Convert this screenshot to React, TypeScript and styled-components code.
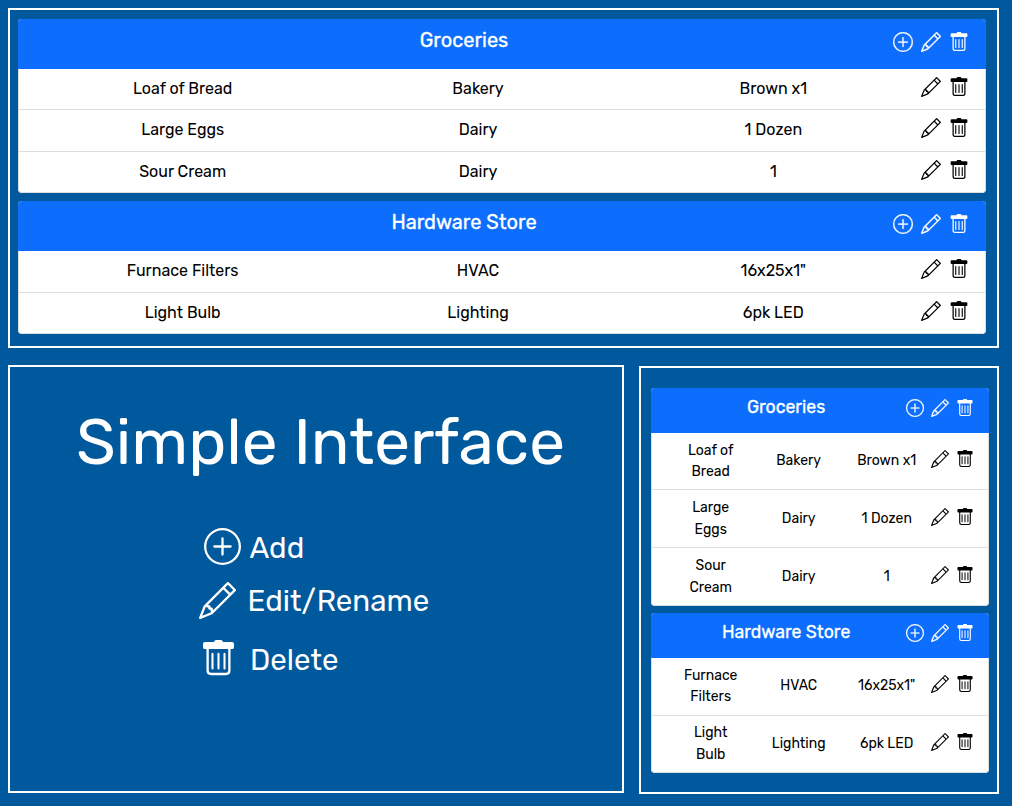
import React from "react";
import styled, { createGlobalStyle } from "styled-components";
import { BsPencil, BsPlusCircle } from "react-icons/bs";

const GlobalStyle = createGlobalStyle`
  *, *::before, *::after { box-sizing: border-box; }
  body {
    margin: 0;
    background: #00589d;
    color: #000;
    font-family: Rubik, Roboto, "Liberation Sans", sans-serif;
  }
`;

const Page = styled.main`
  width: 1012px;
  height: 806px;
  padding: 8px 13px 0 8px;
  overflow: hidden;
`;

const Panel = styled.section`
  border: 2px solid #fff;
`;

const WidePanel = styled(Panel)`
  height: 340px;
  padding: 9px 11px 0 8px;
`;

const Columns = styled.div`
  display: grid;
  grid-template-columns: 616px 360px;
  column-gap: 15px;
  margin-top: 17px;
`;

const IntroPanel = styled(Panel)`
  height: 428px;
  color: #fff;
`;

const NarrowPanel = styled(Panel)`
  height: 428px;
  margin-top: 1px;
  padding: 20px 8.5px 0 10px;
`;

const CardStack = styled.div<{ $compact: boolean }>`
  display: flex;
  flex-direction: column;
  gap: ${(p) => (p.$compact ? 7 : 8)}px;
`;

const Card = styled.article`
  border-radius: 4px;
  overflow: hidden;
  background: #fff;
`;

const CardHeader = styled.header<{ $compact: boolean; $h: number }>`
  display: flex;
  align-items: flex-start;
  height: ${(p) => p.$h}px;
  padding: ${(p) => (p.$compact ? "9px 14.8px 0 15.5px" : "9px 17px 0 17px")};
  background: #0d6efd;
  color: #fff;
  svg[fill="currentColor"] {
    stroke-width: 0.2;
  }
`;

const Title = styled.h5<{ $compact: boolean }>`
  flex: 1;
  margin: 0;
  text-align: center;
  font-size: ${(p) => (p.$compact ? 17.7 : 20)}px;
  line-height: ${(p) => (p.$compact ? 20 : 24)}px;
  font-weight: 400;
  -webkit-text-stroke: 0.3px #fff;
`;

const Row = styled.div<{ $compact: boolean; $h: number }>`
  display: flex;
  align-items: ${(p) => (p.$compact ? "center" : "flex-start")};
  height: ${(p) => p.$h}px;
  padding: ${(p) => (p.$compact ? "0 13.8px 0 14.7px" : "8px 16px 0 16px")};
  border: 1px solid #dcdfe2;
  border-top: 0;
  &:last-child {
    border-radius: 0 0 4px 4px;
  }
`;

const Cell = styled.span<{ $compact: boolean }>`
  flex: 1 1 0;
  text-align: center;
  font-size: ${(p) => (p.$compact ? 14 : 16)}px;
  line-height: ${(p) => (p.$compact ? 21.4 : 24)}px;
  white-space: pre-line;
`;

const Actions = styled.div<{ $compact: boolean; $top: number }>`
  display: flex;
  gap: ${(p) => (p.$compact ? 7 : 8)}px;
  align-self: flex-start;
  padding-top: ${(p) => p.$top}px;
  svg {
    display: block;
    width: ${(p) => (p.$compact ? 18 : 20)}px;
    height: ${(p) => (p.$compact ? 18 : 20)}px;
  }
`;

const Heading = styled.h1`
  margin: 37px 0 0 9px;
  text-align: center;
  font-size: 64px;
  line-height: 76px;
  font-weight: 400;
`;

const Legend = styled.ul`
  display: flex;
  flex-direction: column;
  margin: 48px 0 0 189px;
  padding: 0;
  list-style: none;
`;

const LegendItem = styled.li<{ $h: number; $x: number; $gap: number; $line?: number }>`
  display: flex;
  align-items: flex-start;
  height: ${(p) => p.$h}px;
  padding-left: ${(p) => p.$x}px;
  gap: ${(p) => p.$gap}px;
  font-size: 29.5px;
  line-height: ${(p) => p.$line ?? 37}px;
  svg {
    width: 37px;
    height: 37px;
  }
`;

const TrashIcon = () => (
  <svg viewBox="0 0 16 16" fill="none" stroke="currentColor">
    <path
      d="M6.1.9Q6.1 0 7 0h2q.9 0 .9.9h4q.8 0 .8.8v1.4q0 .8-.8.8H2.1q-.8 0-.8-.8V1.7q0-.8.8-.8z"
      fill="currentColor"
      stroke="none"
    />
    <path d="M3.3 3.5v9.7q0 1.5 1.5 1.5h6.4q1.5 0 1.5-1.5V3.5" />
    <path d="M5.4 6v6.3M8 6v6.3M10.6 6v6.3" strokeWidth=".9" strokeLinecap="round" />
  </svg>
);

type Item = {
  cells: [string, string, string];
  compactName: string;
  h: number;
  compactH: number;
  compactTop: number;
};
type List = { name: string; compactHeader: number; items: Item[] };

const lists: List[] = [
  {
    name: "Groceries",
    compactHeader: 45,
    items: [
      { cells: ["Loaf of Bread", "Bakery", "Brown x1"], compactName: "Loaf of\nBread", h: 41, compactH: 57, compactTop: 17 },
      { cells: ["Large Eggs", "Dairy", "1 Dozen"], compactName: "Large\nEggs", h: 42, compactH: 58, compactTop: 18 },
      { cells: ["Sour Cream", "Dairy", "1"], compactName: "Sour\nCream", h: 41, compactH: 58, compactTop: 18 },
    ],
  },
  {
    name: "Hardware Store",
    compactHeader: 44.5,
    items: [
      { cells: ["Furnace Filters", "HVAC", "16x25x1\""], compactName: "Furnace\nFilters", h: 42, compactH: 58, compactTop: 17.5 },
      { cells: ["Light Bulb", "Lighting", "6pk LED"], compactName: "Light\nBulb", h: 41, compactH: 57.5, compactTop: 17.5 },
    ],
  },
];

const Lists = ({ compact = false }: { compact?: boolean }) => (
  <CardStack $compact={compact}>
    {lists.map((list) => (
      <Card key={list.name}>
        <CardHeader $compact={compact} $h={compact ? list.compactHeader : 50}>
          <Title $compact={compact}>{list.name}</Title>
          <Actions $compact={compact} $top={compact ? 2 : 4}>
            <BsPlusCircle />
            <BsPencil />
            <TrashIcon />
          </Actions>
        </CardHeader>
        {list.items.map((item) => (
          <Row key={item.cells[0]} $compact={compact} $h={compact ? item.compactH : item.h}>
            {item.cells.map((cell, i) => (
              <Cell key={i} $compact={compact}>
                {compact && i === 0 ? item.compactName : cell}
              </Cell>
            ))}
            <Actions $compact={compact} $top={compact ? item.compactTop : 0}>
              <BsPencil />
              <TrashIcon />
            </Actions>
          </Row>
        ))}
      </Card>
    ))}
  </CardStack>
);

const App = () => (
  <>
    <GlobalStyle />
    <Page>
      <WidePanel>
        <Lists />
      </WidePanel>
      <Columns>
        <IntroPanel>
          <Heading>Simple Interface</Heading>
          <Legend>
            <LegendItem $h={54} $x={4.5} $gap={9} $line={39}>
              <BsPlusCircle />
              <span>Add</span>
            </LegendItem>
            <LegendItem $h={58} $x={0} $gap={11.5}>
              <BsPencil />
              <span>Edit/Rename</span>
            </LegendItem>
            <LegendItem $h={40} $x={1} $gap={13} $line={39}>
              <TrashIcon />
              <span>Delete</span>
            </LegendItem>
          </Legend>
        </IntroPanel>
        <NarrowPanel>
          <Lists compact />
        </NarrowPanel>
      </Columns>
    </Page>
  </>
);

export default App;
